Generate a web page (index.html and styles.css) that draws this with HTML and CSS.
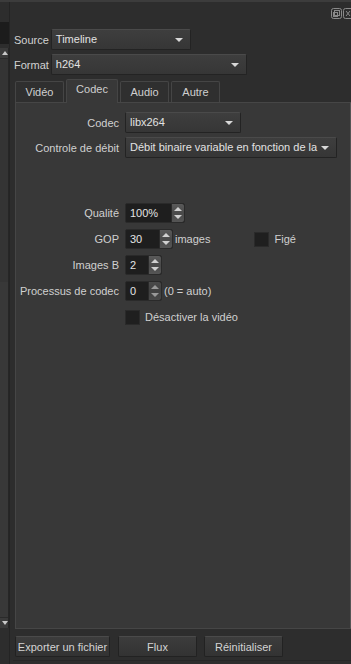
FILE: index.html
```html
<!DOCTYPE html>
<html lang="fr">
<head>
    <meta charset="UTF-8">
    <meta name="viewport" content="width=device-width, initial-scale=1.0">
    <title>Exporter</title>
    <link rel="stylesheet" href="styles.css">
</head>
<body>
    <div class="window">
        <!-- Dock de gauche (coupé) -->
        <div class="side">
            <div class="side-block"></div>
            <div class="side-scroll">
                <div class="arrow-up"></div>
                <div class="track"></div>
                <div class="arrow-down"></div>
            </div>
        </div>

        <div class="main">
            <div class="titlebar">
                <svg class="dock-icon" width="11" height="11" viewBox="0 0 11 11">
                    <rect x="0.5" y="0.5" width="10" height="10" rx="2" fill="none" stroke="#8a8a8a"/>
                    <rect x="3.5" y="2.5" width="5" height="5" fill="none" stroke="#8a8a8a"/>
                    <rect x="2.5" y="4.5" width="4" height="4" fill="none" stroke="#8a8a8a"/>
                </svg>
                <svg class="dock-icon" width="8" height="11" viewBox="0 0 8 11">
                    <rect x="0.5" y="0.5" width="10" height="10" rx="2" fill="none" stroke="#8a8a8a"/>
                    <path d="M3 3 L7 8 M7 3 L3 8" stroke="#8a8a8a"/>
                </svg>
            </div>

            <div class="top-row">
                <span class="lbl">Source</span>
                <div class="combo combo-source">Timeline<span class="caret"></span></div>
            </div>
            <div class="top-row">
                <span class="lbl">Format</span>
                <div class="combo combo-format">h264<span class="caret"></span></div>
            </div>

            <div class="tabs">
                <div class="tab tab-video">Vidéo</div>
                <div class="tab tab-codec active">Codec</div>
                <div class="tab tab-audio">Audio</div>
                <div class="tab tab-autre">Autre</div>
            </div>

            <div class="pane">
                <div class="form">
                    <span class="flbl">Codec</span>
                    <div class="combo combo-codec">libx264<span class="caret"></span></div>

                    <span class="flbl">Controle de débit</span>
                    <div class="combo combo-rate">Débit binaire variable en fonction de la<span class="caret"></span></div>
                </div>

                <div class="form spins">
                    <span class="flbl">Qualité</span>
                    <div class="cell">
                        <div class="spin w59"><span class="val">100%</span><span class="btns"></span></div>
                    </div>

                    <span class="flbl">GOP</span>
                    <div class="cell">
                        <div class="spin w47"><span class="val">30</span><span class="btns"></span></div>
                        <span class="suffix">images</span>
                        <span class="check check-fige"></span>
                        <span class="suffix">Figé</span>
                    </div>

                    <span class="flbl">Images B</span>
                    <div class="cell">
                        <div class="spin w36"><span class="val">2</span><span class="btns"></span></div>
                    </div>

                    <span class="flbl">Processus de codec</span>
                    <div class="cell">
                        <div class="spin w36 dim"><span class="val">0</span><span class="btns"></span></div>
                        <span class="suffix">(0 = auto)</span>
                    </div>

                    <span></span>
                    <div class="cell">
                        <span class="check"></span>
                        <span class="suffix">Désactiver la vidéo</span>
                    </div>
                </div>
            </div>

            <div class="buttons">
                <button class="btn btn-export">Exporter un fichier</button>
                <button class="btn btn-flux">Flux</button>
                <button class="btn btn-reset">Réinitialiser</button>
            </div>
            <div class="bottom-strip"></div>
        </div>
    </div>
</body>
</html>
```

FILE: styles.css
```css
body {
    margin: 0;
    background-color: #2d2d2d;
    font-family: 'Liberation Sans', Arial, sans-serif;
    font-size: 11px;
    color: #cfcfcf;
    overflow: hidden;
}
.window {
    display: flex;
    height: 664px;
    border-top: 2px solid #3c3c3c;
    box-sizing: border-box;
}

/* dock de gauche */
.side {
    width: 9px;
    border-right: 1px solid #242424;
    display: flex;
    flex-direction: column;
}
.side-block {
    margin-top: 20px;
    height: 22px;
    background-color: #1c1c1c;
}
.side-scroll {
    margin-top: 4px;
    height: 580px;
    display: flex;
    flex-direction: column;
    background-color: #333;
    border-right: 1px solid #262626;
}
.arrow-up,
.arrow-down {
    height: 10px;
    background-color: #3a3a3a;
    position: relative;
}
.arrow-up::after {
    content: "";
    position: absolute;
    left: 2px;
    top: 3px;
    border-left: 3px solid transparent;
    border-right: 3px solid transparent;
    border-bottom: 4px solid #c8c8c8;
}
.arrow-down::after {
    content: "";
    position: absolute;
    left: 2px;
    top: 3px;
    border-left: 3px solid transparent;
    border-right: 3px solid transparent;
    border-top: 4px solid #c8c8c8;
}
.track {
    flex: 1;
    border-top: 1px solid #2a2a2a;
    border-bottom: 1px solid #2a2a2a;
    background: linear-gradient(#343434 0, #343434 40%, #383838 40%);
}

.main {
    flex: 1;
    display: flex;
    flex-direction: column;
    padding-left: 3px;
}
.titlebar {
    height: 23px;
    display: flex;
    justify-content: flex-end;
    align-items: flex-start;
    gap: 1px;
    padding-top: 6px;
    box-sizing: border-box;
    overflow: hidden;
}
.dock-icon {
    display: block;
}

.top-row {
    display: flex;
    align-items: center;
    gap: 2px;
    margin-top: 4px;
}
.lbl {
    padding-left: 1px;
    color: #d2d2d2;
}
.combo {
    position: relative;
    height: 21px;
    line-height: 19px;
    box-sizing: border-box;
    padding-left: 4px;
    background: linear-gradient(#3e3e3e, #363636);
    border: 1px solid #232323;
    border-top-color: #4a4a4a;
    border-radius: 2px;
    color: #e2e2e2;
    white-space: nowrap;
    overflow: hidden;
}
.caret {
    position: absolute;
    right: 7px;
    top: 8px;
    border-left: 4px solid transparent;
    border-right: 4px solid transparent;
    border-top: 4px solid #d8d8d8;
}
.combo-source { width: 140px; }
.combo-format { width: 196px; }
.combo-codec { width: 116px; }
.combo-rate { width: 212px; }

/* onglets */
.tabs {
    display: flex;
    gap: 2px;
    margin-top: 4px;
    padding-left: 2px;
    height: 23px;
    align-items: flex-end;
}
.tab {
    height: 21px;
    line-height: 20px;
    text-align: center;
    box-sizing: border-box;
    background-color: #2f2f2f;
    border: 1px solid #454545;
    border-bottom: none;
    border-radius: 2px 2px 0 0;
    color: #cfcfcf;
}
.tab.active {
    height: 24px;
    line-height: 19px;
    background-color: #383838;
    margin-bottom: -1px;
    position: relative;
}
.tab-video { width: 49px; }
.tab-codec { width: 52px; }
.tab-audio { width: 49px; }
.tab-autre { width: 49px; }

.pane {
    margin-left: 2px;
    height: 527px;
    background-color: #383838;
    border: 1px solid #464646;
    border-right-color: #555;
    box-sizing: border-box;
}
.form {
    display: grid;
    grid-template-columns: 103px auto;
    column-gap: 6px;
    row-gap: 4px;
    align-items: center;
    justify-content: start;
}
.form:first-child {
    margin-top: 9px;
}
.spins {
    margin-top: 45px;
    row-gap: 6px;
}
.flbl {
    text-align: right;
    color: #d0d0d0;
    white-space: nowrap;
}
.cell {
    display: flex;
    align-items: center;
    height: 20px;
}
.spin {
    display: flex;
    height: 20px;
    box-sizing: border-box;
    background-color: #1e1e1e;
    border: 1px solid #2a2a2a;
    border-radius: 2px;
}
.spin .val {
    flex: 1;
    padding-left: 4px;
    line-height: 18px;
    color: #e4e4e4;
}
.btns {
    width: 12px;
    position: relative;
    background: linear-gradient(#5a5a5a, #4a4a4a 50%, #555);
    border-left: 1px solid #2a2a2a;
    border-radius: 0 2px 2px 0;
}
.btns::before,
.btns::after {
    content: "";
    position: absolute;
    left: 2px;
    border-left: 4px solid transparent;
    border-right: 4px solid transparent;
}
.btns::before {
    top: 3px;
    border-bottom: 4px solid #d0d0d0;
}
.btns::after {
    bottom: 3px;
    border-top: 4px solid #d0d0d0;
}
.spin.dim .btns {
    background: linear-gradient(#4a4a4a, #404040 50%, #484848);
}
.spin.dim .btns::before { border-bottom-color: #999; }
.spin.dim .btns::after { border-top-color: #999; }
.w59 { width: 60px; }
.w47 { width: 48px; }
.w36 { width: 37px; }
.suffix {
    margin-left: 2px;
    color: #d0d0d0;
    white-space: nowrap;
}
.check {
    width: 13px;
    height: 13px;
    background-color: #1f1f1f;
    border: 1px solid #2a2a2a;
    margin-right: 3px;
}
.check-fige {
    margin-left: 44px;
}

/* boutons du bas */
.buttons {
    display: flex;
    margin-top: 7px;
    padding-left: 2px;
}
.btn {
    height: 21px;
    font-family: inherit;
    font-size: 11px;
    color: #d4d4d4;
    background: linear-gradient(#3c3c3c, #333);
    border: 1px solid #222;
    border-top-color: #4a4a4a;
    border-radius: 2px;
    padding: 0;
}
.btn-export { width: 95px; margin-right: 8px; }
.btn-flux { width: 79px; margin-right: 7px; }
.btn-reset { width: 79px; }
.bottom-strip {
    margin-top: 3px;
    flex: 1;
    border-top: 1px solid #262626;
}
```
